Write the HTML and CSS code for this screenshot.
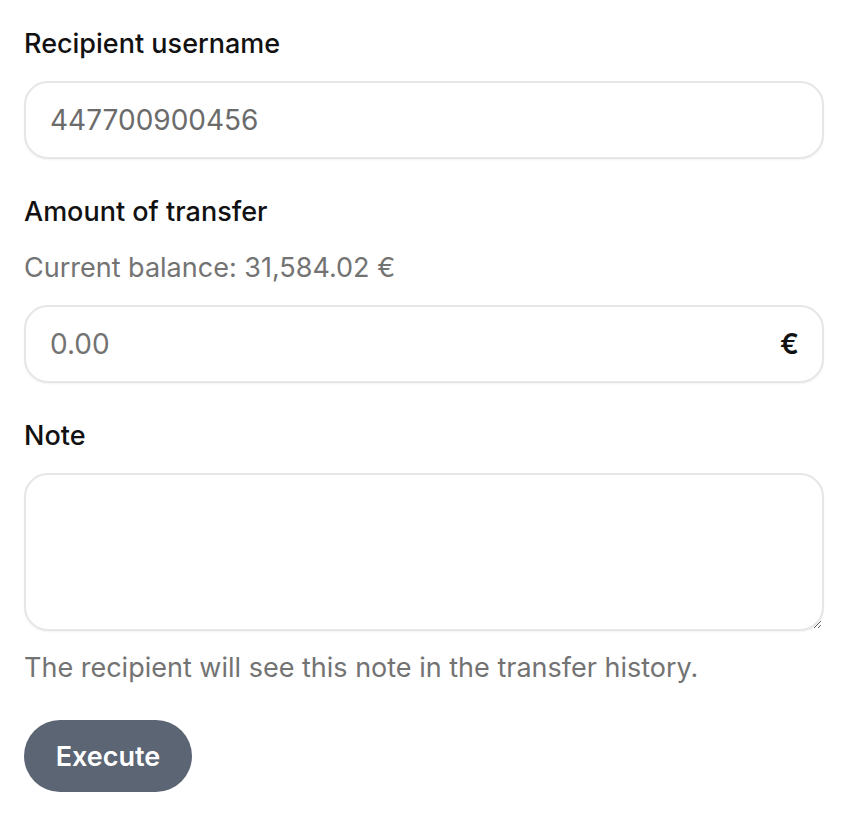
FILE: index.html
```html
<!DOCTYPE html>
<html lang="en">
<head>
<meta charset="utf-8">
<title>Transfer</title>
<link rel="stylesheet" href="styles.css">
</head>
<body>
<form class="form">
  <div class="field">
    <label class="label" for="recipient">Recipient username</label>
    <div class="input-wrap">
      <input class="input" id="recipient" type="text" value="447700900456">
    </div>
  </div>
  <div class="field">
    <label class="label label-tight" for="amount">Amount of transfer</label>
    <p class="hint balance">Current balance: 31,584.02 €</p>
    <div class="input-wrap">
      <input class="input" id="amount" type="text" placeholder="0.00">
      <span class="suffix">€</span>
    </div>
  </div>
  <div class="field">
    <label class="label" for="note">Note</label>
    <textarea class="textarea" id="note"></textarea>
    <p class="hint help">The recipient will see this note in the transfer history.</p>
  </div>
  <button class="button" type="button">Execute</button>
</form>
</body>
</html>
```
FILE: styles.css
```css
* { box-sizing: border-box; }
html, body { margin: 0; padding: 0; background: #ffffff; }
body {
  font-family: Inter, "Noto Sans", "Liberation Sans", sans-serif;
  color: #111111;
}
.form {
  display: flex;
  flex-direction: column;
  padding: 28px 24px 24px 24px;
}
.field {
  display: flex;
  flex-direction: column;
  margin-bottom: 37px;
}
.label {
  font-size: 27px;
  line-height: 32px;
  font-weight: 500;
  color: #111111;
  margin-bottom: 21px;
}
.label-tight { margin-bottom: 24px; }
.hint {
  margin: 0;
  font-size: 27px;
  line-height: 32px;
  color: #737373;
}
.balance { margin-bottom: 21px; }
.help { margin-top: 21px; margin-bottom: -1px; }
.input-wrap {
  position: relative;
  display: flex;
  align-items: center;
}
.input, .textarea {
  width: 100%;
  border: 2px solid #e6e6e6;
  border-radius: 24px;
  background: #ffffff;
  box-shadow: 0 1px 2px rgba(0,0,0,0.05);
  font-family: inherit;
  font-size: 28px;
  color: #6b6b6b;
  outline: none;
}
.input {
  height: 78px;
  padding: 0 24px;
}
.input::placeholder { color: #737373; }
.textarea {
  height: 158px;
  padding: 16px 24px;
  resize: vertical;
}
.suffix {
  position: absolute;
  right: 25px;
  font-size: 28px;
  font-weight: 600;
  color: #111111;
}
.button {
  align-self: flex-start;
  width: 168px;
  height: 72px;
  border: none;
  border-radius: 36px;
  background: #5b6574;
  color: #ffffff;
  font-family: inherit;
  font-size: 27px;
  font-weight: 600;
}
```
